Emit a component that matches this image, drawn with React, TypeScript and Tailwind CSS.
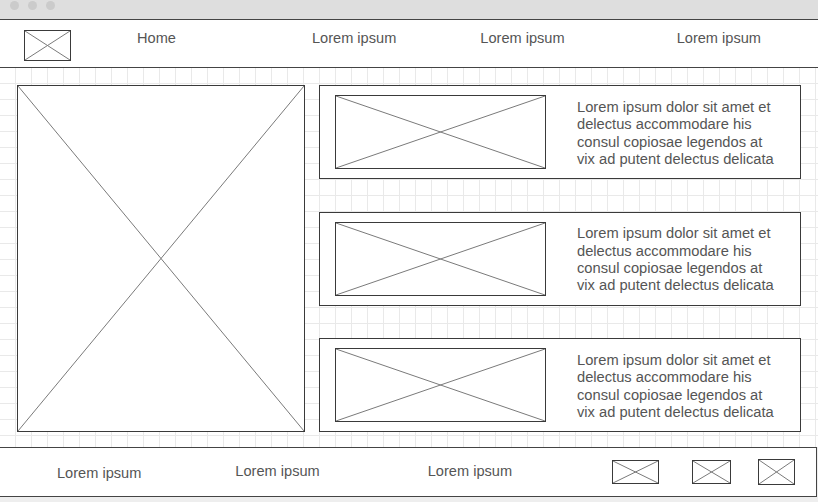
import React from 'react';

function Placeholder({ className }: { className: string }) {
  return (
    <div className={`relative border border-[#3a3a3a] bg-white ${className}`}>
      <svg className="absolute inset-0 h-full w-full" preserveAspectRatio="none" viewBox="0 0 100 100">
        <line x1="0" y1="0" x2="100" y2="100" stroke="#7a7a7a" strokeWidth="1" vectorEffect="non-scaling-stroke" />
        <line x1="100" y1="0" x2="0" y2="100" stroke="#7a7a7a" strokeWidth="1" vectorEffect="non-scaling-stroke" />
      </svg>
    </div>
  );
}

const body =
  'Lorem ipsum dolor sit amet et delectus accommodare his consul copiosae legendos at vix ad putent delectus delicata';

function Card() {
  return (
    <div className="flex h-[94px] items-center border border-[#3a3a3a] bg-white pl-[15px]">
      <Placeholder className="h-[74px] w-[211px]" />
      <p className="ml-[31px] mt-[3px] w-[202px] text-[14.7px] leading-[17.4px] text-[#555]">{body}</p>
    </div>
  );
}

export default function App() {
  return (
    <div className="flex h-[502px] w-[818px] flex-col overflow-hidden bg-[#eeeeee] font-['Liberation_Sans',Arial,sans-serif]">
      {/* window chrome */}
      <div className="flex h-[20px] items-start gap-[9px] border-b border-[#444] bg-[#dedede] pl-[10px] pt-[1px]">
        <span className="h-[9px] w-[9px] rounded-full bg-[#cbcbcb]" />
        <span className="h-[9px] w-[9px] rounded-full bg-[#cbcbcb]" />
        <span className="h-[9px] w-[9px] rounded-full bg-[#cbcbcb]" />
      </div>

      {/* header */}
      <div className="flex h-[48px] items-start border-b border-[#444] bg-white text-[14.6px] text-[#555]">
        <Placeholder className="ml-[24px] mt-[10px] h-[31px] w-[47px]" />
        <span className="ml-[66px] mt-[8px]">Home</span>
        <span className="ml-[136px] mt-[8px]">Lorem ipsum</span>
        <span className="ml-[84px] mt-[8px]">Lorem ipsum</span>
        <span className="ml-[112px] mt-[8px]">Lorem ipsum</span>
      </div>

      {/* content */}
      <div className="flex h-[379px] gap-[14px] bg-white bg-[linear-gradient(to_right,#e9e9e9_1px,transparent_1px),linear-gradient(to_bottom,#e9e9e9_1px,transparent_1px)] bg-[size:16px_16px] bg-[position:15px_15px] pl-[17px] pt-[17px]">
        <Placeholder className="h-[347px] w-[288px]" />
        <div className="flex h-[347px] w-[482px] flex-col justify-between">
          <Card />
          <Card />
          <Card />
        </div>
      </div>

      {/* footer */}
      <div className="flex h-[50px] w-[817px] items-center border-y border-r border-[#444] bg-white text-[14.6px] text-[#555]">
        <span className="ml-[57px] mt-[3px]">Lorem ipsum</span>
        <span className="ml-[94px]">Lorem ipsum</span>
        <span className="ml-[108px]">Lorem ipsum</span>
        <Placeholder className="ml-[100px] h-[24px] w-[47px]" />
        <Placeholder className="ml-[33px] h-[24px] w-[39px]" />
        <Placeholder className="ml-[27px] h-[26px] w-[37px]" />
      </div>
    </div>
  );
}
